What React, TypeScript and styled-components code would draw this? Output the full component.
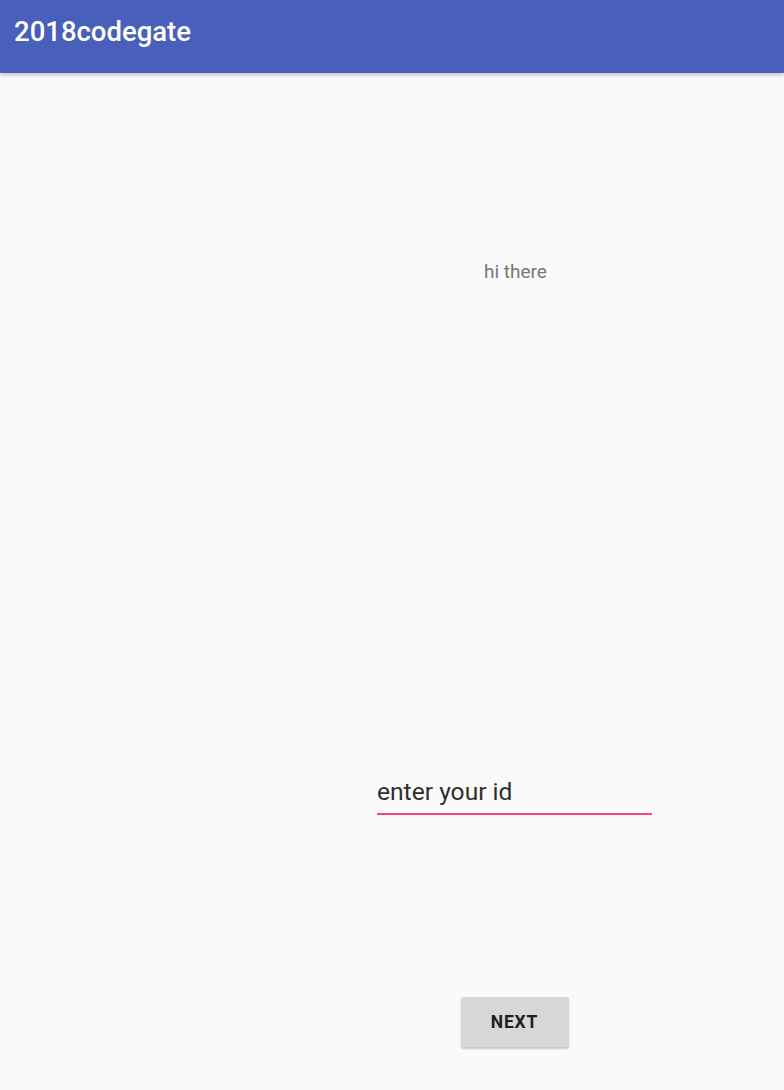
import React from "react";
import styled, { createGlobalStyle } from "styled-components";

const Global = createGlobalStyle`
  html, body { margin: 0; padding: 0; background: #fafafa; }
  body { font-family: Roboto, "Noto Sans", sans-serif; }
`;

const Page = styled.div`
  width: 784px;
  height: 1090px;
  background: #fafafa;
  display: flex;
  flex-direction: column;
  overflow: hidden;
`;

const AppBar = styled.header`
  height: 73px;
  flex: none;
  background: #4860bc;
  box-shadow: 0 2px 4px rgba(0, 0, 0, 0.22);
  display: flex;
  align-items: center;
  padding-left: 14px;
  position: relative;
  z-index: 1;
`;

const Title = styled.h1`
  margin: 0;
  font-family: Roboto, sans-serif;
  font-weight: 500;
  font-size: 27.5px;
  color: #ffffff;
  letter-spacing: 0;
  margin-top: -11px;
`;

const Content = styled.main`
  display: flex;
  flex-direction: column;
  align-items: center;
  width: 275px;
  margin-left: 377px;
`;

const Greeting = styled.p`
  margin: 189px 0 0;
  font-size: 19px;
  color: #777777;
  line-height: 20px;
  padding-left: 2px;
`;

const Field = styled.label`
  margin-top: 495px;
  width: 275px;
  display: flex;
  flex-direction: column;
`;

const FieldText = styled.span`
  font-size: 24.6px;
  color: #2e2e2e;
  line-height: 30px;
  padding-bottom: 6px;
  border-bottom: 2px solid #ff4081;
`;

const Button = styled.button`
  margin-top: 182px;
  width: 108px;
  height: 50px;
  border: none;
  border-radius: 2px;
  background: #d7d7d7;
  box-shadow: 0 2px 2px rgba(0, 0, 0, 0.2);
  font-family: Roboto, sans-serif;
  font-weight: 700;
  font-size: 17.5px;
  color: #1e1e1e;
  letter-spacing: 0.8px;
  padding: 0;
`;

export default function App() {
  return (
    <>
      <Global />
      <Page>
        <AppBar>
          <Title>2018codegate</Title>
        </AppBar>
        <Content>
          <Greeting>hi there</Greeting>
          <Field>
            <FieldText>enter your id</FieldText>
          </Field>
          <Button>NEXT</Button>
        </Content>
      </Page>
    </>
  );
}
